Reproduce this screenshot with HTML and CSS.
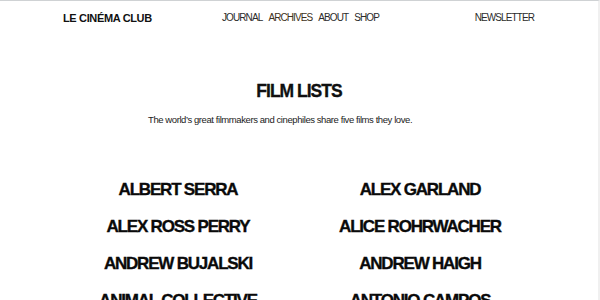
FILE: index.html
```html
<!DOCTYPE html>
<html>
<head>
<meta charset="utf-8">
<link rel="stylesheet" href="styles.css">
</head>
<body>
<header class="site-header">
  <div class="logo">LE CINÉMA CLUB</div>
  <nav class="main-nav">
    <a href="#">JOURNAL</a>
    <a href="#" class="active">ARCHIVES</a>
    <a href="#">ABOUT</a>
    <a href="#">SHOP</a>
  </nav>
  <a href="#" class="newsletter">NEWSLETTER</a>
</header>
<main class="content">
  <h1 class="title">FILM LISTS</h1>
  <p class="intro">The world’s great filmmakers and cinephiles share five films they love.</p>
  <ul class="names">
    <li>ALBERT SERRA</li>
    <li>ALEX GARLAND</li>
    <li>ALEX ROSS PERRY</li>
    <li>ALICE ROHRWACHER</li>
    <li>ANDREW BUJALSKI</li>
    <li>ANDREW HAIGH</li>
    <li>ANIMAL COLLECTIVE</li>
    <li>ANTONIO CAMPOS</li>
  </ul>
</main>
</body>
</html>
```
FILE: styles.css
```css
html, body {
  margin: 0;
  padding: 0;
  background: #fff;
  overflow: hidden;
  height: 300px;
}
body {
  border-top: 1px solid #cfd2d4;
  border-right: 2px solid #f0f0f0;
  box-sizing: border-box;
  font-family: "Liberation Sans", Arial, sans-serif;
  color: #111;
}
.site-header {
  display: flex;
  align-items: center;
  height: 33px;
  padding: 0 64px 0 63px;
}
.logo {
  font-size: 11px;
  font-weight: bold;
  letter-spacing: -0.35px;
  width: 159px;
}
.main-nav {
  display: flex;
  gap: 6px;
  flex: 1;
}
.main-nav a, .newsletter {
  font-size: 10px;
  color: #2b2b2b;
  text-decoration: none;
  letter-spacing: -0.9px;
}
.main-nav a.active {
  color: #3d3120;
}
.content {
  padding: 46px 57px 0;
}
.title {
  margin: 0;
  text-align: center;
  font-size: 17.5px;
  letter-spacing: -1px;
  line-height: 22px;
  -webkit-text-stroke: 0.3px #0a0a0a;
}
.intro {
  margin: 12px 0 0 91px;
  font-size: 9.5px;
  letter-spacing: -0.42px;
  color: #222;
}
.names {
  list-style: none;
  margin: 54px 0 0;
  padding: 0;
  display: grid;
  grid-template-columns: 1fr 1fr;
  row-gap: 15px;
}
.names li {
  text-align: center;
  font-weight: bold;
  font-size: 17px;
  line-height: 22px;
  letter-spacing: -1.2px;
  color: #0a0a0a;
  -webkit-text-stroke: 0.35px #0a0a0a;
}
```
